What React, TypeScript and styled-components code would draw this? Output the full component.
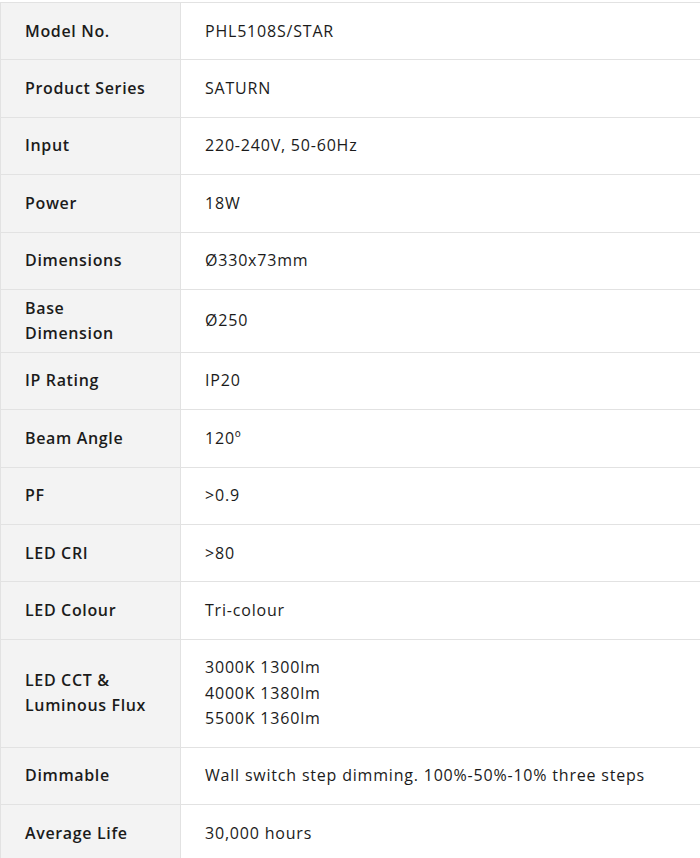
import React from "react";
import styled, { createGlobalStyle } from "styled-components";

const Global = createGlobalStyle`
  html, body { margin: 0; padding: 0; background: #ffffff; overflow: hidden; }
  body { font-family: "Open Sans", "Liberation Sans", sans-serif; color: #1b1b1b; }
`;

const Page = styled.div`
  padding-top: 2px;
`;

const Table = styled.table`
  width: calc(100% + 2px);
  border-collapse: collapse;
  font-size: 16px;
  line-height: 25.3px;
`;

const Row = styled.tr``;

const LabelCell = styled.th`
  width: 131px;
  background: #f3f3f3;
  border: 1px solid #e2e2e2;
  padding: 5.7px 24px;
  text-align: left;
  font-weight: 600;
  letter-spacing: 0.65px;
  vertical-align: middle;
`;

const ValueCell = styled.td`
  border: 1px solid #e2e2e2;
  padding: 15.55px 24px;
  font-weight: 400;
  letter-spacing: 0.8px;
  vertical-align: middle;
`;

const rows: { label: React.ReactNode; value: React.ReactNode }[] = [
  { label: "Model No.", value: "PHL5108S/STAR" },
  { label: "Product Series", value: "SATURN" },
  { label: "Input", value: "220-240V, 50-60Hz" },
  { label: "Power", value: "18W" },
  { label: "Dimensions", value: "Ø330x73mm" },
  { label: <>Base<br />Dimension</>, value: "Ø250" },
  { label: "IP Rating", value: "IP20" },
  { label: "Beam Angle", value: "120º" },
  { label: "PF", value: ">0.9" },
  { label: "LED CRI", value: ">80" },
  { label: "LED Colour", value: "Tri-colour" },
  {
    label: <>LED CCT &amp;<br />Luminous Flux</>,
    value: <>3000K 1300lm<br />4000K 1380lm<br />5500K 1360lm</>,
  },
  { label: "Dimmable", value: "Wall switch step dimming. 100%-50%-10% three steps" },
  { label: "Average Life", value: "30,000 hours" },
];

export default function App() {
  return (
    <Page>
      <Global />
      <Table>
        <tbody>
          {rows.map((r, i) => (
            <Row key={i}>
              <LabelCell scope="row">{r.label}</LabelCell>
              <ValueCell>{r.value}</ValueCell>
            </Row>
          ))}
        </tbody>
      </Table>
    </Page>
  );
}
